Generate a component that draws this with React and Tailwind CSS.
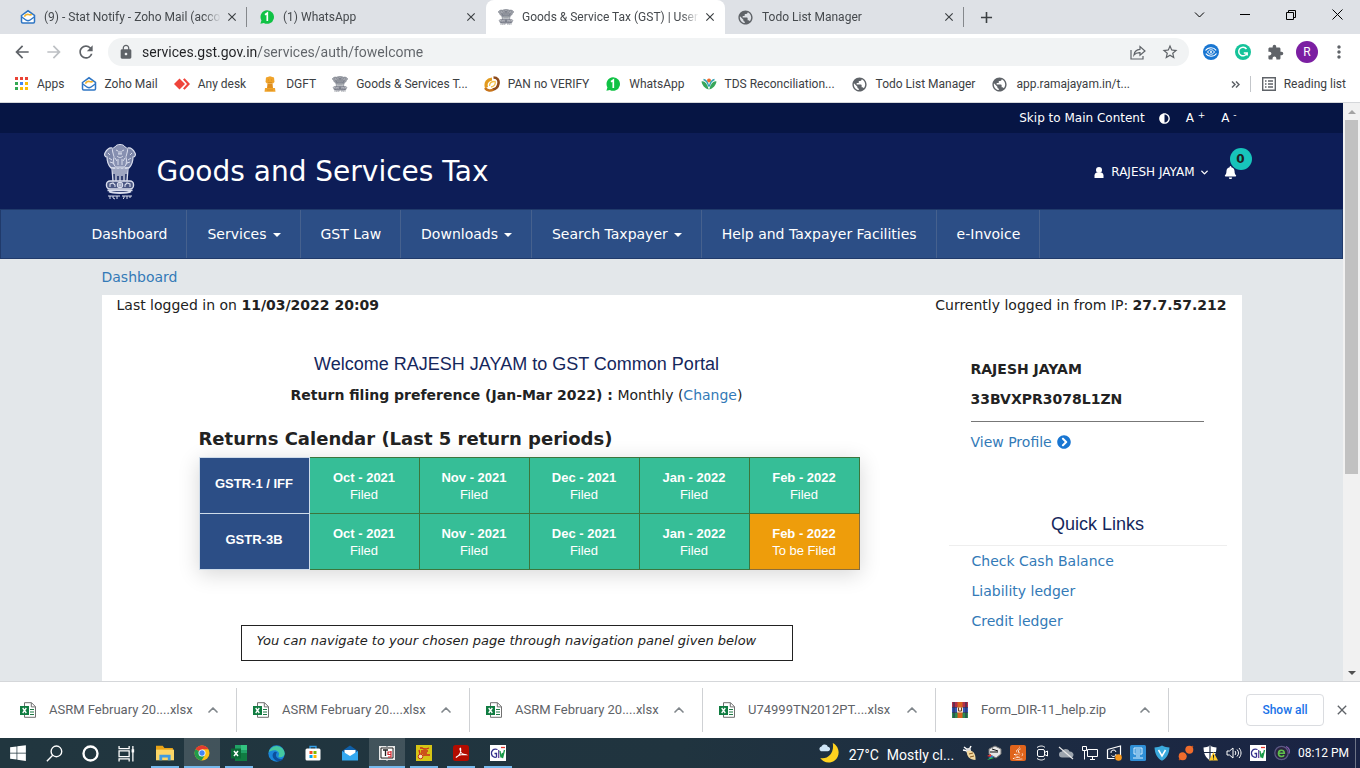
import React from "react";
import {
  MdLock, MdRefresh, MdArrowBack, MdArrowForward, MdStarBorder, MdExtension,
  MdMoreVert, MdPublic, MdClose, MdAdd,
} from "react-icons/md";
import { FaWindows, FaAdjust, FaChevronCircleRight, FaBell, FaJava } from "react-icons/fa";
import { ChevronUp, ChevronDown } from "lucide-react";

const UI = "font-['Roboto','Noto_Sans',sans-serif]";
const PAGE = "font-['DejaVu_Sans',Verdana,sans-serif]";

/* ---------- icons ---------- */

function Emblem({ className, fit = "xMidYMid meet" }) {
  return (
    <svg viewBox="0 0 32 56" preserveAspectRatio={fit} className={className} fill="none" stroke="currentColor" aria-hidden="true">
      <path d="M11 3c1-2 3-2.500 5-2.500s4 .5 5 2.500c2 .5 3 2 2.500 4l-1.500 6 1 6-2.500 4h-9L9 19l1-6-1.500-6C8 5 9 3.500 11 3Z" fill="currentColor" fillOpacity=".6" strokeWidth="1" />
      <path d="M8.500 4C5 3 3 5 1 9c-1 2 0 4 2 4 0 4 1 8 4 11h4M23.500 4c3.500-1 5.500 1 7.500 5 1 2 0 4-2 4 0 4-1 8-4 11h-4" fill="currentColor" fillOpacity=".55" strokeWidth="1.200" />
      <path d="M12 6l2 1m6-1-2 1m-4 3h4m-3-3v3m2-3v3m-4 2c2 2 4 2 6 0M11 14l2 3m8-3-2 3m-5-2v6m4-6v6M4 9l2 2m22-2-2 2M5 14l3 2m19-2-3 2M6 18l3 1m17-1-3 1" strokeWidth="1" />
      <path d="M8 24h16v13H8Z" fill="currentColor" fillOpacity=".2" stroke="none" />
      <path d="M7 24h18M8 25l1 12M12 25v12M16 25v12M20 25v12M24 25l-1 12M10 24v6m4-6v8m4-8v8m4-8v6" strokeWidth="1.300" />
      <rect x="2.500" y="37" width="27" height="8" rx="3.500" fill="currentColor" fillOpacity=".3" strokeWidth="1.400" />
      <circle cx="16" cy="41" r="2.600" strokeWidth="1.200" />
      <path d="M16 38.500v5M13.500 41h5M6 43v-3l3-1 2 2v2M26 43v-3l-3-1-2 2v2" strokeWidth="1.100" />
      <path d="M5 47.500c4 2 18 2 22 0M3.500 46.300h25" strokeWidth="1.800" />
      <path d="M4 52h12M18 52h10M6 52v3m3-3v2l2 1m2-3v3m7-3v2l-1 1m4-3v3m3-3v2" strokeWidth="1" />
    </svg>
  );
}

function ZohoMail() {
  return (
    <svg viewBox="0 0 16 16" className="size-4" fill="none" aria-hidden="true">
      <path d="M1.500 6.500 8 1.800l6.500 4.700v6.300c0 .8-.5 1.200-1.200 1.200H2.700c-.8 0-1.200-.5-1.200-1.200Z" fill="#fff" stroke="#2f76c4" strokeWidth="1.500" />
      <path d="M4.500 7.800C5 5.800 7 5 8.500 5.600c1.300.5 2.200.5 3.400-.2" stroke="#f0b32f" strokeWidth="1.600" />
      <path d="m1.800 8 4.400 3.200c1.200.8 2.400.8 3.600 0L14.200 8" stroke="#2f76c4" strokeWidth="1.400" />
    </svg>
  );
}

function WhatsAppBadge() {
  return (
    <svg viewBox="0 0 16 16" className="size-4" aria-hidden="true">
      <path d="M8 1.200a6.800 6.800 0 1 1-3.200 12.700L1.400 14.800l1-3.400A6.800 6.800 0 0 1 8 1.200Z" fill="#10c245" />
      <path d="M6 5.800 8.300 4.200V12" fill="none" stroke="#fff" strokeWidth="1.700" />
    </svg>
  );
}

function AppsGrid() {
  const colors = ["#ea4335", "#ea4335", "#ea4335", "#34a853", "#4285f4", "#fbbc05", "#34a853", "#fbbc05", "#fbbc05"];
  return (
    <svg viewBox="0 0 16 16" className="size-4" aria-hidden="true">
      {colors.map((c, i) => (
        <rect key={i} x={2 + (i % 3) * 5} y={1 + Math.floor(i / 3) * 5} width="3" height="3" fill={c} />
      ))}
    </svg>
  );
}

const AnyDesk = () => (
  <svg viewBox="0 0 16 16" className="size-4" aria-hidden="true">
    <path d="M5.500 2.500 11 8l-5.500 5.500L0 8Z" fill="#ef443b" />
    <path d="m9 3.500 1.600-1.300L16 8l-5.400 5.800L9 12.500 13 8Z" fill="#ef443b" />
  </svg>
);

const Dgft = () => (
  <svg viewBox="0 0 16 16" className="size-4" aria-hidden="true">
    <path d="M4 1.500 8 .3l4 1.200.5 4.500-1.500 1.500H5L3.500 6Z" fill="#f0a32a" />
    <path d="M5.500 7.500h5l.5 4.500h-6Z" fill="#e08e1c" />
    <path d="M3 12h10l.5 3.700h-11Z" fill="#f0a32a" />
    <path d="M6 4h1m2 0h1M6 6.500h4M5 14h6" stroke="#d98f1e" />
  </svg>
);

const Pan = () => (
  <svg viewBox="0 0 16 16" className="size-4" fill="none" aria-hidden="true">
    <path d="M2.500 11.500C1 7 3.500 3.500 8 3" stroke="#e29a1d" strokeWidth="3.200" />
    <path d="M9.500 1.500c4 0 5.500 2.500 5 6s-3 6-6 6" stroke="#8c4a1c" strokeWidth="2.600" />
    <path d="M1 12c2 3 6 3 8.500 1.500" stroke="#c8741a" strokeWidth="2.600" />
    <path d="M5.500 10c0-3 2-4.500 5-4.500M11 5c1 3-.5 5.500-4 6" stroke="#f3c04a" strokeWidth="1.300" />
  </svg>
);

const Tds = () => (
  <svg viewBox="0 0 16 16" className="size-4" aria-hidden="true">
    <circle cx="8" cy="4.500" r="2" fill="#ee6a2a" />
    <path d="M.5 5.500c3-.8 5.700 2 7.200 8C4 12.500 1.200 9.500.5 5.500ZM15.500 5.500c-3-.8-5.700 2-7.200 8 3.700-1 6.500-4 7.200-8Z" fill="#37a65a" />
    <path d="M2.500 3.500c2.500.5 4.300 3 5.200 7M13.500 3.500c-2.500.5-4.300 3-5.200 7" stroke="#2f9fb1" strokeWidth="1.300" fill="none" />
  </svg>
);

const Globe = () => <MdPublic className="size-[17px] text-[#5f6368]" />;
const GstIcon = () => <Emblem className="size-4" fit="none" />;

const ExcelFile = () => (
  <svg viewBox="0 0 16 16" className="size-4" aria-hidden="true">
    <path d="M4.500.700h7l4 4v10.600h-11Z" fill="#fff" stroke="#707070" />
    <path d="M11.300.700v4.200h4.200" fill="none" stroke="#707070" />
    <path d="M10 7.500h4M10 10h4M10 12.500h4" stroke="#1d7a45" />
    <rect y="4" width="9" height="9" fill="#107c41" />
    <path d="m2.700 6 3.600 5M6.300 6l-3.600 5" stroke="#fff" strokeWidth="1.300" />
  </svg>
);

const ZipFile = () => (
  <svg viewBox="0 0 16 16" className="size-4" aria-hidden="true">
    <rect y="0" width="16" height="5.500" fill="#b3304a" />
    <rect y="5.500" width="16" height="5" fill="#3456b8" />
    <rect y="10.500" width="16" height="5.500" fill="#2e8b4f" />
    <path d="M2 0v16M14 0v16" stroke="#222b55" />
    <path d="M0 5.500h16M0 10.500h16" stroke="#222b55" strokeWidth=".7" />
    <rect x="5.500" width="5" height="16" fill="#d9631e" />
    <rect x="5" y="5.500" width="6" height="5" fill="#f3e6d8" />
    <path d="M6.500 5.500v3.500h3V5.500" fill="none" stroke="#6b3b1e" />
  </svg>
);

/* ---------- browser chrome ---------- */

function Tab({ icon, title, active, separator }) {
  return (
    <div className={`relative flex w-[239px] min-w-0 items-center gap-2 pl-3 pr-[7px] ${active ? "rounded-t-lg bg-white" : ""}`}>
      {icon}
      <span className="min-w-0 flex-1 overflow-hidden whitespace-nowrap [mask-image:linear-gradient(to_right,#000_90%,transparent)]">{title}</span>
      <button type="button" aria-label="Close tab" className="-ml-[5px] flex size-4 items-center justify-center text-[#3c4043]">
        <MdClose className="size-[14px]" />
      </button>
      {separator && <span className="absolute right-0 h-5 w-px bg-[#85888c]" />}
    </div>
  );
}

function TabStrip() {
  return (
    <div className="flex h-[34px] bg-[#dee1e6] pl-2 text-[#45494d]">
      <Tab icon={<ZohoMail />} title="(9) - Stat Notify - Zoho Mail (acco" separator />
      <Tab icon={<WhatsAppBadge />} title="(1) WhatsApp" />
      <Tab icon={<span className="text-[#5d6270]"><GstIcon /></span>} title="Goods & Service Tax (GST) | User" active />
      <Tab icon={<Globe />} title="Todo List Manager" separator />
      <button type="button" aria-label="New tab" className="flex w-11 items-center justify-center text-[#3c4043]">
        <MdAdd className="size-[19px]" />
      </button>
      <div className="ml-auto flex h-[29px] text-black">
        <button type="button" aria-label="Search tabs" className="flex w-[46px] items-center justify-center">
          <svg viewBox="0 0 10 6" className="h-[6px] w-[11px]" fill="none" stroke="currentColor"><path d="m.5.5 4.500 4.500L9.500.5" /></svg>
        </button>
        <button type="button" aria-label="Minimize" className="flex w-[46px] items-center justify-center"><span className="h-px w-[10px] bg-black" /></button>
        <button type="button" aria-label="Restore" className="flex w-[46px] items-center justify-center">
          <svg viewBox="0 0 10 10" className="size-[10px]" fill="none" stroke="currentColor"><path d="M.5 2.500h7v7h-7ZM2.500 2.500v-2h7v7h-2" /></svg>
        </button>
        <button type="button" aria-label="Close" className="flex w-[46px] items-center justify-center">
          <svg viewBox="0 0 11 11" className="size-[11px]" fill="none" stroke="currentColor"><path d="m.5.5 10 10M10.500.5l-10 10" /></svg>
        </button>
      </div>
    </div>
  );
}

function Toolbar() {
  return (
    <div className="flex h-9 items-center bg-white pl-[6px] pr-[5px] text-[#5f6368]">
      <button type="button" aria-label="Back" className="flex w-8 justify-center"><MdArrowBack className="size-5" /></button>
      <button type="button" aria-label="Forward" className="flex w-8 justify-center text-[#bdc0c4]"><MdArrowForward className="size-5" /></button>
      <button type="button" aria-label="Reload" className="flex w-8 justify-center"><MdRefresh className="size-5" /></button>
      <div className="ml-[6px] flex h-7 flex-1 items-center rounded-full bg-[#f1f3f4] pl-[10px] pr-[3px]">
        <MdLock className="size-4" />
        <label htmlFor="address" className="sr-only">Address</label>
        <input
          id="address"
          defaultValue="services.gst.gov.in/services/auth/fowelcome"
          className="ml-2 h-6 flex-1 bg-[linear-gradient(to_right,#202124_115px,#5f6368_115px)] bg-clip-text text-sm text-transparent outline-none"
        />
        <button type="button" aria-label="Share" className="flex w-8 justify-center">
          <svg viewBox="0 0 16 16" className="size-4" fill="none" stroke="currentColor" strokeWidth="1.200">
            <path d="M1 6v9h12v-3M4 11c.5-4 2.500-5.500 6-5.700V2.500l5 4.500-5 4.300V8.600C7.500 8.500 5.500 9 4 11Z" />
          </svg>
        </button>
        <button type="button" aria-label="Bookmark" className="flex w-8 justify-center"><MdStarBorder className="size-[18px]" /></button>
      </div>
      <div className="ml-[6px] flex items-center">
        <button type="button" aria-label="Sync extension" className="flex w-8 justify-center">
          <svg viewBox="0 0 16 16" className="size-4" fill="none" stroke="#fff">
            <circle cx="8" cy="8" r="8" fill="#1976d2" stroke="none" />
            <path d="M2.500 6.500C4 4.300 6 3.700 8 3.700c2.500 0 4 1 5.200 2.600M13.500 9.500C12 11.700 10 12.300 8 12.300c-2.500 0-4-1-5.200-2.600" strokeWidth="1.100" />
            <path d="M4.500 8C6 6 7 5.800 8 5.800S10 6 11.500 8C10 10 9 10.200 8 10.200S6 10 4.500 8Z" strokeWidth="1" />
            <circle cx="8" cy="8" r="1" fill="#fff" stroke="none" />
          </svg>
        </button>
        <button type="button" aria-label="Grammarly" className="flex w-8 justify-center">
          <svg viewBox="0 0 16 16" className="size-4" fill="none" stroke="#fff">
            <circle cx="8" cy="8" r="8" fill="#15c39a" stroke="none" />
            <path d="M11.500 5A4.300 4.300 0 1 0 12 9.200M8.800 8.900h3.400v2.600" strokeWidth="1.500" />
          </svg>
        </button>
        <button type="button" aria-label="Extensions" className="flex w-8 justify-center"><MdExtension className="size-[17px]" /></button>
        <button type="button" aria-label="Profile" className="mx-[5px] flex size-[22px] items-center justify-center rounded-full bg-[#7b1fa2] text-xs text-white">R</button>
        <button type="button" aria-label="Menu" className="flex w-8 justify-center"><MdMoreVert className="size-5" /></button>
      </div>
    </div>
  );
}

const bookmarks = [
  ["Apps", <AppsGrid />],
  ["Zoho Mail", <ZohoMail />],
  ["Any desk", <AnyDesk />],
  ["DGFT", <Dgft />],
  ["Goods & Services T...", <span className="text-[#5d6270]"><GstIcon /></span>],
  ["PAN no VERIFY", <Pan />],
  ["WhatsApp", <WhatsAppBadge />],
  ["TDS Reconciliation...", <Tds />],
  ["Todo List Manager", <Globe />],
  ["app.ramajayam.in/t...", <Globe />],
];

function BookmarksBar() {
  return (
    <div className="flex h-[33px] items-center border-b border-[#d5d7da] bg-white pb-1 pl-[13px] pr-[14px] text-[#3c4043]">
      <div className="flex gap-4">
        {bookmarks.map(([label, icon]) => (
          <a key={label} href="#" className="flex items-center gap-2 whitespace-nowrap">{icon}{label}</a>
        ))}
      </div>
      <button type="button" aria-label="More bookmarks" className="ml-auto flex w-[18px] justify-center text-[#5f6368]">
        <svg viewBox="0 0 9 7" className="h-[7px] w-[9px]" fill="none" stroke="currentColor" strokeWidth="1.500"><path d="m1 .5 3 3-3 3M5 .5l3 3-3 3" /></svg>
      </button>
      <span className="mx-[5px] h-4 w-px bg-[#c3c6ca]" />
      <button type="button" className="flex items-center gap-2 whitespace-nowrap pl-[6px]">
        <svg viewBox="0 0 14 14" className="size-[14px]" fill="none" stroke="#5f6368" strokeWidth="1.400">
          <path d="M.7.7h12.600v12.600H.7ZM3 4h1.500M6 4h5M3 7h1.500M6 7h5M3 10h1.500M6 10h5" />
        </svg>
        Reading list
      </button>
    </div>
  );
}

/* ---------- portal page ---------- */

const navItems = [
  ["Dashboard"], ["Services", true], ["GST Law"], ["Downloads", true],
  ["Search Taxpayer", true], ["Help and Taxpayer Facilities"], ["e-Invoice"],
];

function PortalHeader() {
  return (
    <header className="text-white">
      <div className="bg-[#061544]">
        <div className="mx-auto flex h-[30px] max-w-[1140px] items-center justify-end pr-[5px] text-xs">
          <a href="#main">Skip to Main Content</a>
          <button type="button" aria-label="Contrast" className="ml-[14px]"><FaAdjust className="size-[11px]" /></button>
          <button type="button" className="ml-4">A <sup>+</sup></button>
          <button type="button" className="ml-4">A <sup>-</sup></button>
        </div>
      </div>
      <div className="bg-[#0d1d57]">
        <div className="mx-auto flex h-[76px] max-w-[1140px] items-center pr-[5px] pt-[2px]">
          <Emblem className="ml-[2px] h-14 w-8 text-[#d9ddec]" />
          <a href="#" className="ml-[21px] text-[28px]">Goods and Services Tax</a>
          <div className="ml-auto flex items-center text-xs">
            <svg viewBox="0 0 10 11" className="h-[11px] w-[10px]" fill="currentColor"><circle cx="5" cy="3" r="3" /><path d="M.5 11V8.500C.5 6.500 2 5.500 3 5.500h4c1 0 2.500 1 2.500 3V11Z" /></svg>
            <button type="button" className="ml-[7px] flex items-center gap-1">RAJESH JAYAM <ChevronDown className="size-[11px]" strokeWidth={3} /></button>
            <button type="button" aria-label="Notifications" className="relative ml-[14px]">
              <FaBell className="size-[13px]" />
              <span className="absolute -top-[18px] left-[6px] flex size-[22px] items-center justify-center rounded-full bg-[#17c4bb] font-bold text-[#202020]">0</span>
            </button>
          </div>
        </div>
      </div>
      <nav className="border border-[#203a6b] bg-[#2c4e86]">
        <ul className="mx-auto flex h-12 max-w-[1200px] text-sm">
          {navItems.map(([label, menu]) => (
            <li key={label} className="flex border-r border-[#46618e]">
              <a href="#" className="flex items-center gap-[6px] whitespace-nowrap pl-5 pr-[19px]">
                {label}
                {menu && <span className="mt-[2px] border-x-4 border-t-4 border-x-transparent border-t-white" />}
              </a>
            </li>
          ))}
        </ul>
      </nav>
    </header>
  );
}

const periods = ["Oct - 2021", "Nov - 2021", "Dec - 2021", "Jan - 2022", "Feb - 2022"];
const returnsRows = [
  ["GSTR-1 / IFF", ["Filed", "Filed", "Filed", "Filed", "Filed"]],
  ["GSTR-3B", ["Filed", "Filed", "Filed", "Filed", "To be Filed"]],
];

function ReturnsTable() {
  return (
    <table className="mt-[6px] w-[661px] table-fixed border-collapse text-center font-['Liberation_Sans',Arial,sans-serif] text-[13px] leading-[17px] text-white shadow-[0_4px_20px_rgba(0,0,0,0.16)]">
      <tbody>
        {returnsRows.map(([name, statuses]) => (
          <tr key={name} className="h-14">
            <th scope="row" className="border border-[#cfdcea] bg-[#2c4e86] pb-1 font-bold">{name}</th>
            {statuses.map((s, i) => (
              <td key={i} className={`border ${s === "Filed" ? "border-[#3c763d] bg-[#36be97]" : "border-[#8a6d3b] bg-[#ee9d0b]"}`}>
                <b className="block">{periods[i]}</b>{s}
              </td>
            ))}
          </tr>
        ))}
      </tbody>
    </table>
  );
}

function Portal() {
  return (
    <div className="min-w-0 flex-1 overflow-hidden bg-[#e3e7ea] text-sm text-[#222]">
      <PortalHeader />
      <div className="mx-auto max-w-[1140px]">
        <a href="#" className="block h-9 leading-9 text-[#337ab7]">Dashboard</a>
        <main id="main" className="min-h-screen bg-white px-[15px]">
          <div className="flex justify-between leading-5">
            <p>Last logged in on <b>11/03/2022 20:09</b></p>
            <p>Currently logged in from IP: <b>27.7.57.212</b></p>
          </div>
          <div className="grid grid-cols-[1fr_278px] gap-8">
            <section>
              <h1 className="mt-[37px] text-center font-['Liberation_Sans',Arial,sans-serif] text-lg leading-6 text-[#15275c]">Welcome RAJESH JAYAM to GST Common Portal</h1>
              <p className="mt-[9px] text-center leading-5"><b>Return filing preference (Jan-Mar 2022) :</b> Monthly (<a href="#" className="text-[#337ab7]">Change</a>)</p>
              <div className="pl-[82px]">
                <h2 className="mt-[22px] text-lg font-bold leading-6">Returns Calendar (Last 5 return periods)</h2>
                <ReturnsTable />
              </div>
              <p className="mx-auto mt-[55px] w-[552px] border border-[#222] px-[15px] pb-[9px] pt-[5px] text-[13px] italic leading-5">You can navigate to your chosen page through navigation panel given below</p>
            </section>
            <aside>
              <div className="ml-[22px] mt-[39px] mr-[23px] leading-[30px]">
                <p className="font-bold">RAJESH JAYAM</p>
                <p className="font-bold">33BVXPR3078L1ZN</p>
                <hr className="mb-[5px] mt-[7px] border-[#777]" />
                <a href="#" className="flex items-center gap-[5px] text-[#337ab7]">View Profile <FaChevronCircleRight className="size-[14px] text-[#1976d2]" /></a>
              </div>
              <h2 className="mt-[55px] pl-5 text-center font-['Liberation_Sans',Arial,sans-serif] text-lg leading-6 text-[#15275c]">Quick Links</h2>
              <hr className="mt-[9px] border-[#eee]" />
              <ul className="pl-[23px] leading-[30px] text-[#337ab7]">
                <li><a href="#">Check Cash Balance</a></li>
                <li><a href="#">Liability ledger</a></li>
                <li><a href="#">Credit ledger</a></li>
              </ul>
            </aside>
          </div>
        </main>
      </div>
    </div>
  );
}

function Scrollbar() {
  return (
    <div className="flex w-[17px] flex-col items-center bg-[#f1f1f1]">
      <button type="button" aria-label="Scroll up" className="flex h-[17px] items-center"><span className="border-x-4 border-b-4 border-x-transparent border-b-[#a3a3a3]" /></button>
      <div className="w-[13px] flex-1"><div className="h-[65%] bg-[#c1c1c1]" /></div>
      <button type="button" aria-label="Scroll down" className="flex h-[17px] items-center"><span className="border-x-4 border-t-4 border-x-transparent border-t-[#505050]" /></button>
    </div>
  );
}

/* ---------- download shelf and taskbar ---------- */

const downloads = [
  ["ASRM February 20....xlsx", ExcelFile],
  ["ASRM February 20....xlsx", ExcelFile],
  ["ASRM February 20....xlsx", ExcelFile],
  ["U74999TN2012PT....xlsx", ExcelFile],
  ["Form_DIR-11_help.zip", ZipFile],
];

function DownloadShelf() {
  return (
    <div className="flex h-[57px] items-center border-t border-[#d5d7da] bg-white pl-1 pr-[10px] text-[13px] text-[#5f6368]">
      {downloads.map(([name, Icon], i) => (
        <div key={i} className="flex h-11 w-[233px] items-center border-r border-[#cfd1d4] pl-4 pr-[15px]">
          <button type="button" className="flex items-center gap-[13px] whitespace-nowrap"><Icon />{name}</button>
          <button type="button" aria-label="File options" className="ml-auto"><ChevronUp className="size-4 text-[#80868b]" strokeWidth={2.5} /></button>
        </div>
      ))}
      <button type="button" className="ml-auto h-8 w-[78px] rounded border border-[#dadce0] text-xs font-medium text-[#1a73e8]">Show all</button>
      <button type="button" aria-label="Close shelf" className="ml-[10px]"><MdClose className="size-4" /></button>
    </div>
  );
}

const Svg = ({ children, box = 16, className = "size-4" }) => (
  <svg viewBox={`0 0 ${box} ${box}`} className={className} fill="none" aria-hidden="true">{children}</svg>
);

const launchers = [
  ["Start", <FaWindows className="size-[18px]" />],
  ["Search", <Svg className="size-[17px]"><circle cx="9.800" cy="6" r="5" stroke="#fff" strokeWidth="1.300" /><path d="M6.300 9.700.8 15.300" stroke="#fff" strokeWidth="1.300" /></Svg>],
  ["Cortana", <Svg className="size-[17px]"><circle cx="8" cy="8" r="6.600" stroke="#fff" strokeWidth="2.200" /></Svg>],
  ["Task view", <Svg className="size-[17px]"><path d="M1 1v2.500h9.500V1M1 15.500V13h9.500v2.500M1 5.500h9.500v5.500H1ZM14 1v14.500" stroke="#fff" strokeWidth="1.200" /><path d="M12.800 4h2.400v3h-2.400Z" fill="#fff" /></Svg>],
];

const apps = [
  ["File Explorer", "open", <Svg className="size-[18px]"><path d="M0 1.500h6l1.500 2H15v10H0Z" fill="#e8a317" /><path d="M0 5h16v9.500H0Z" fill="#fcd667" /><path d="M3 14.500V9.500h10v5h-2.500V12h-5v2.500Z" fill="#3f9be0" /></Svg>],
  ["Chrome", "active", <Svg><circle cx="8" cy="8" r="7.500" fill="#fbc116" /><path d="M8 8 1.500 4.300A7.500 7.500 0 0 1 14.500 4.300H8Z" fill="#e33b2e" /><path d="M8 8 1.500 4.300A7.500 7.500 0 0 0 7.500 15.500L11.200 9.800Z" fill="#229a4a" /><circle cx="8" cy="8" r="3.500" fill="#fff" /><circle cx="8" cy="8" r="2.700" fill="#4285f4" /></Svg>],
  ["Excel", "open", <Svg><path d="M4 0h12v16H4Z" fill="#21a366" /><path d="M10 0h6v5h-6Z" fill="#33c481" /><path d="M4 8h12v8H4Z" fill="#107c41" /><path d="M0 3.500h10v10H0Z" fill="#0b6a37" /><path d="m3 6 4 5M7 6l-4 5" stroke="#fff" strokeWidth="1.500" /></Svg>],
  ["Edge", "", <Svg className="size-[17px]"><circle cx="8" cy="8" r="7.700" fill="#1a86d9" /><path d="M.5 7A7.700 7.700 0 0 1 15.700 8c0 2.500-2 3.500-4 3.500-1.500 0-2.300-.6-1.700-1.500C11.500 7.500 9 5 6 5 3.500 5 1.500 6 .5 7Z" fill="#45c9a0" /><path d="M6 6.500c-3 2-2 7.500 3.500 8.800 2 .3 4-1 5-2.300-3 1-7 0-7-3.500 0-1.200.5-2 1-2.300C8 6.500 7 6.200 6 6.500Z" fill="#0c4f9c" /></Svg>],
  ["Store", "", <Svg><path d="M5 4V1.500h6V4" stroke="#35a0e8" strokeWidth="1.300" /><rect x=".5" y="3.500" width="15" height="12" rx="1.500" fill="#fff" /><path d="M4.500 6h3v3h-3Z" fill="#f25022" /><path d="M8.500 6h3v3h-3Z" fill="#7fba00" /><path d="M4.500 10h3v3h-3Z" fill="#00a4ef" /><path d="M8.500 10h3v3h-3Z" fill="#ffb900" /></Svg>],
  ["Mail", "", <Svg><path d="M0 6 8 .5 16 6v9H0Z" fill="#0f5fa8" /><path d="M2.500 5h11v6h-11Z" fill="#fff" /><path d="m0 6 8 5 8-5v9.500H0Z" fill="#33a8f0" /></Svg>],
  ["Tally", "active", <Svg><path d="M0 1h7l1 1 1-1h7v14H9l-1 1-1-1H0Z" fill="#e8e8e8" /><path d="M2 3h12v10H2Z" fill="#fff" stroke="#222" /><path d="M4 5h5M6.500 5v6" stroke="#222" strokeWidth="1.300" /><path d="M12 7H9v2.500h3M12 6v6H9" stroke="#d3222a" strokeWidth="1.200" /></Svg>],
  ["Action", "open", <Svg><path d="M0 0h16v16H0Z" fill="#d5c416" /><path d="M4 3h2l2 1h2l3-1M5 6h7M5 8h6M7 10h7M3 5l2 8" stroke="#c92d1f" strokeWidth="1.300" /><circle cx="4.500" cy="11.500" r="2.300" fill="#f6e8b0" stroke="#c92d1f" /></Svg>],
  ["Acrobat", "open", <Svg><rect width="16" height="16" rx="2.500" fill="#b30b00" /><path d="M3 12.500c3-1.500 5-5 4.700-8.500C7.600 2.700 6.700 3 7 4.500c.6 3 3 5.500 6 5.300-2.500-1.200-7.500.2-9.500 2Z" stroke="#fff" strokeWidth="1.100" /></Svg>],
  ["GST", "open", <GnIcon />],
];

function GnIcon() {
  return (
    <Svg>
      <path d="M0 0h16v16H0Z" fill="#fff" />
      <path d="M7.500 4.500C3 3 1 6.500 1.500 9s3 4 5 3V8.500H4.500" stroke="#33308c" strokeWidth="1.300" />
      <path d="M8.700 5v8" stroke="#5a3a98" strokeWidth="1.200" />
      <path d="m10 6 1 6.500L12.500 8v5L14.500 5" stroke="#189a48" strokeWidth="1.300" />
      <path d="M11 2.500h4" stroke="#e2342c" strokeWidth="1.300" />
    </Svg>
  );
}

const tray = [
  ["Bee", <Svg><path d="M2 2l4 3M1 5l5 1M9 1 7 5" stroke="#fff" strokeWidth="1.500" /><circle cx="6.500" cy="5.500" r="2.500" fill="#ddd" /><path d="M5 6c5-2 9 2 8.500 9C8 15 4 11 5 6Z" fill="#f2d9a0" /><path d="M7 9l4-1M8 12l4-1" stroke="#8a5a20" /></Svg>],
  ["Scanner", <Svg><path d="m3 4 6-3 6 3v5l-5 4-7-4Z" fill="#e6e6e6" stroke="#777" /><path d="M4 7h8M6 4l6 2" stroke="#111" /><path d="m1 11 4-2v3Z" fill="#e33" /><path d="m1 15 4-3 3 1Z" fill="#3c5" /><path d="m2 13 4-2 2 1Z" fill="#38f" /></Svg>],
  ["Java", <span className="flex size-4 items-center justify-center rounded-xs bg-[#e0641c]"><FaJava className="size-[14px]" /></span>],
  ["Meet Now", <Svg><rect x="3.500" y="4.500" width="7" height="7" rx="1.500" stroke="#fff" /><path d="m10.500 7.500 3-1.500v5l-3-1.500M3 2.500c3-2 6-2 8 0M3 13.500c3 2 6 2 8 0" stroke="#fff" /></Svg>],
  ["OneDrive", <Svg><path d="M4 12.500a3 3 0 0 1 0-6c1-3 6-3.500 7.500 0 3 0 4 2 4 3.200 0 2-1.500 2.800-3 2.800Z" fill="#9da5ae" /><path d="m1 2 14 12" stroke="#e6e6e6" strokeWidth="1.200" /></Svg>],
  ["Network", <Svg><path d="M5.500 4.500h10v7h-10ZM10.500 11.500v3M8 14.500h5M.5 1.500h4v4h-4ZM2.500 5.500v9" stroke="#fff" /></Svg>],
  ["Update", <Svg><path d="M1.500 4.500 14.500 1v10M1.500 4.500v9h7" stroke="#fff" strokeWidth="1.200" /><path d="M5 8a2.500 2.500 0 0 1 5-1M10 9a2.500 2.500 0 0 1-4.500 1.500" stroke="#fff" /><circle cx="12.500" cy="12.500" r="3.300" fill="#f8981d" /></Svg>],
  ["Monitor", <Svg><rect width="16" height="16" rx="1.500" fill="#2f8fd6" /><path d="M4 3h8v6H4ZM6 11h4M3 13h10M5.500 5h5M5.500 7h5" stroke="#d7efff" /></Svg>],
  ["Shield V", <Svg><path d="M8 .5c3 1.500 5 1.800 7.500 2C15 9 13 13 8 15.800 3 13 1 9 .5 2.500 3 2.300 5 2 8 .5Z" fill="#3aa9dc" /><path d="m4.500 5 3.500 6 3.500-6" stroke="#fff" strokeWidth="1.500" /></Svg>],
  ["Plug", <Svg><path d="M1 15 15 1" stroke="#b64b1c" strokeWidth="1.200" /><circle cx="11.300" cy="4.700" r="4" fill="#ef6c2c" /><circle cx="4.700" cy="11.300" r="4" fill="#ef6c2c" /><path d="m5.500 5.500 5 5" stroke="#1d2a45" strokeWidth="1.500" /></Svg>],
  ["Security", <Svg><path d="M8 .5c2.500 1.500 4 1.800 6.500 2-.3 6.500-2 10-6.500 13C3.500 12.500 1.800 9 1.500 2.500 4 2.300 5.500 2 8 .5Z" fill="#fff" /><path d="M8 1v14M1.500 7.500h13" stroke="#1d2a45" strokeWidth="1.200" /><path d="m11.500 7 4.500 8.500H7Z" fill="#ffca28" /><path d="M11.500 9.800v3M11.500 13.500v1" stroke="#222" /></Svg>],
  ["Volume", <Svg><path d="M1 6h2.500L7 3v10l-3.500-3H1ZM9 6c1 1.200 1 2.800 0 4M11 4.500c2 2 2 5 0 7M13 3c2.700 3 2.700 7 0 10" stroke="#fff" /></Svg>],
  ["GST tray", <GnIcon />],
  ["Antivirus", <Svg><circle cx="7.500" cy="8" r="6.700" fill="#2a2340" stroke="#5d5a86" strokeWidth="1.200" /><path d="M4.700 8.200h5.600c0-4-5.800-4-5.800.300 0 3.300 4 3.800 5.600 1.800" stroke="#5fc04b" strokeWidth="1.600" /><path d="M12 1.500c3 1 4 4 3 7" stroke="#8a5bb0" strokeWidth="1.200" /></Svg>],
];

function Taskbar() {
  return (
    <footer className="flex h-[30px] bg-linear-to-r from-[#21363f] via-[#20343f] to-[#1a2344] text-white">
      {launchers.map(([name, icon]) => (
        <button key={name} type="button" aria-label={name} className="flex w-9 items-center justify-center">{icon}</button>
      ))}
      <div className="ml-[3px] flex gap-px">
        {apps.map(([name, state, icon]) => (
          <button key={name} type="button" aria-label={name} className={`relative flex w-9 items-center justify-center ${state === "active" ? "bg-white/15" : ""}`}>
            {icon}
            {state && <span className={`absolute bottom-0 h-[2px] bg-[#76b9ed] ${state === "active" ? "w-9" : "w-7"}`} />}
          </button>
        ))}
      </div>
      <button type="button" className="ml-auto flex items-center whitespace-nowrap pt-1 text-sm">
        <Svg className="mb-1 mr-[10px] size-5"><path d="M11 0c6 3 6 11 1.500 14-4 3-9.500 1.500-11.500-2C7 13.500 12.500 8 11 0Z" fill="#ffd21f" /><path d="M1.500 6.500a2 2 0 0 1 .5-3.800c1-2 4.500-2 5 .3 2.500.2 2.500 3.500 0 3.500Z" fill="#cfe6f7" /></Svg>
        27°C<span className="ml-2">Mostly cl...</span>
      </button>
      <div className="ml-1 flex">
        {tray.map(([name, icon]) => (
          <button key={name} type="button" aria-label={name} className="flex w-6 items-center justify-center">{icon}</button>
        ))}
      </div>
      <time className="ml-1 mr-[6px] flex items-center whitespace-nowrap">08:12 PM</time>
      <span className="mr-1 w-px bg-[#6d7486]" />
    </footer>
  );
}

export default function App() {
  return (
    <div className={`flex h-screen flex-col overflow-hidden text-xs ${UI}`}>
      <TabStrip />
      <Toolbar />
      <BookmarksBar />
      <div className={`flex min-h-0 flex-1 ${PAGE}`}>
        <Portal />
        <Scrollbar />
      </div>
      <DownloadShelf />
      <Taskbar />
    </div>
  );
}
